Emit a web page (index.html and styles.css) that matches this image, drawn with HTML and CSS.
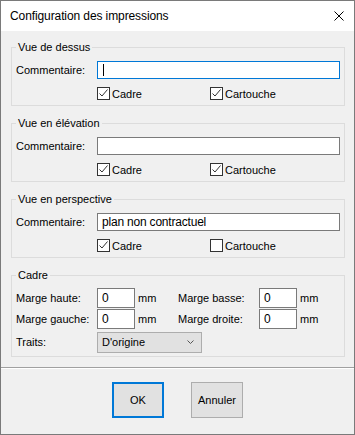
FILE: index.html
```html
<!DOCTYPE html>
<html lang="fr">
<head>
    <meta charset="UTF-8">
    <title>Configuration des impressions</title>
    <link rel="stylesheet" href="styles.css">
</head>
<body>
<div class="fenetre">
    <div class="titre">
        <span>Configuration des impressions</span>
        <svg class="fermer" width="10" height="10" viewBox="0 0 10 10"><path d="M0.5 0.5L9.5 9.5M9.5 0.5L0.5 9.5" stroke="#000" stroke-width="1"/></svg>
    </div>

    <div class="contenu">
        <!-- Vue de dessus -->
        <fieldset class="groupe">
            <legend>Vue de dessus</legend>
            <div class="ligne">
                <span>Commentaire:</span>
                <div class="champ actif"><span class="curseur"></span></div>
            </div>
            <div class="ligne cases">
                <span></span>
                <div class="options">
                    <div class="option"><span class="case"><svg width="11" height="11" viewBox="0 0 11 11"><path d="M1.5 5.5L4 8L9.5 1.5" fill="none" stroke="#333" stroke-width="1"/></svg></span>Cadre</div>
                    <div class="option"><span class="case"><svg width="11" height="11" viewBox="0 0 11 11"><path d="M1.5 5.5L4 8L9.5 1.5" fill="none" stroke="#333" stroke-width="1"/></svg></span>Cartouche</div>
                </div>
            </div>
        </fieldset>

        <!-- Vue en élévation -->
        <fieldset class="groupe">
            <legend>Vue en élévation</legend>
            <div class="ligne">
                <span>Commentaire:</span>
                <div class="champ"></div>
            </div>
            <div class="ligne cases">
                <span></span>
                <div class="options">
                    <div class="option"><span class="case"><svg width="11" height="11" viewBox="0 0 11 11"><path d="M1.5 5.5L4 8L9.5 1.5" fill="none" stroke="#333" stroke-width="1"/></svg></span>Cadre</div>
                    <div class="option"><span class="case"><svg width="11" height="11" viewBox="0 0 11 11"><path d="M1.5 5.5L4 8L9.5 1.5" fill="none" stroke="#333" stroke-width="1"/></svg></span>Cartouche</div>
                </div>
            </div>
        </fieldset>

        <!-- Vue en perspective -->
        <fieldset class="groupe">
            <legend>Vue en perspective</legend>
            <div class="ligne">
                <span>Commentaire:</span>
                <div class="champ">plan non contractuel</div>
            </div>
            <div class="ligne cases">
                <span></span>
                <div class="options">
                    <div class="option"><span class="case"><svg width="11" height="11" viewBox="0 0 11 11"><path d="M1.5 5.5L4 8L9.5 1.5" fill="none" stroke="#333" stroke-width="1"/></svg></span>Cadre</div>
                    <div class="option"><span class="case"></span>Cartouche</div>
                </div>
            </div>
        </fieldset>

        <!-- Cadre -->
        <fieldset class="groupe cadre">
            <legend>Cadre</legend>
            <div class="grille">
                <span>Marge haute:</span>
                <div class="champ">0</div>
                <span class="unite">mm</span>
                <span>Marge basse:</span>
                <div class="champ">0</div>
                <span class="unite">mm</span>

                <span>Marge gauche:</span>
                <div class="champ">0</div>
                <span class="unite">mm</span>
                <span>Marge droite:</span>
                <div class="champ">0</div>
                <span class="unite">mm</span>

                <span class="traits">Traits:</span>
                <div class="liste">
                    <span>D'origine</span>
                    <svg width="7" height="4" viewBox="0 0 7 4"><path d="M0.5 0.5L3.5 3.5L6.5 0.5" fill="none" stroke="#555" stroke-width="1"/></svg>
                </div>
            </div>
        </fieldset>
    </div>

    <div class="separateur"></div>

    <div class="boutons">
        <div class="bouton defaut">OK</div>
        <div class="bouton">Annuler</div>
    </div>
</div>
</body>
</html>
```

FILE: styles.css
```css
body {
    margin: 0;
    font-family: "Liberation Sans", Arial, sans-serif;
    font-size: 11px;
    color: #000;
}

.fenetre {
    width: 353px;
    height: 433px;
    border: 1px solid #7a7a7a;
    background: #f0f0f0;
}

.titre {
    height: 30px;
    background: #fff;
    display: flex;
    align-items: center;
    justify-content: space-between;
    padding: 0 10px 0 9px;
    font-size: 12px;
    letter-spacing: -0.1px;
}

.contenu {
    padding: 9px 9px 0 10px;
}

.groupe {
    margin: 0 0 10px;
    padding: 7px 4px 5px;
    border: 1px solid #dcdcdc;
    min-width: 0;
}

.groupe legend {
    padding: 0 2px;
    line-height: 14px;
}

.ligne {
    display: grid;
    grid-template-columns: 81px 1fr;
    align-items: center;
}

.cases {
    margin-top: 8px;
}

.champ {
    height: 18px;
    box-sizing: border-box;
    border: 1px solid #7a7a7a;
    background: #fff;
    padding-left: 4px;
    display: flex;
    align-items: center;
    font-size: 12px;
    letter-spacing: -0.2px;
}

.champ.actif {
    border-color: #0078d7;
}

.curseur {
    width: 1px;
    height: 12px;
    margin-left: 1px;
    background: #000;
}

.options {
    display: flex;
    height: 13px;
}

.option {
    display: flex;
    align-items: center;
    gap: 2px;
    width: 113px;
}

.case {
    width: 13px;
    height: 13px;
    box-sizing: border-box;
    border: 1px solid #333;
    background: #fff;
    display: flex;
}

.cadre {
    padding-top: 6px;
}

.grille {
    display: grid;
    grid-template-columns: 81px 38px 43px 81px 38px auto;
    grid-template-rows: 20px 20px 21px;
    row-gap: 1px;
    align-items: center;
}

.grille .champ {
    height: 20px;
}

.unite {
    padding-left: 3px;
}

.traits, .liste {
    margin-top: 3px;
}

.liste {
    grid-column: 2 / span 3;
    width: 105px;
    height: 21px;
    box-sizing: border-box;
    border: 1px solid #adadad;
    background: #e1e1e1;
    display: flex;
    align-items: center;
    justify-content: space-between;
    padding: 0 7px 0 4px;
}

.separateur {
    margin-top: 2px;
    border-top: 1px solid #a0a0a0;
    border-bottom: 1px solid #fff;
}

.boutons {
    display: flex;
    justify-content: center;
    gap: 27px;
    padding-top: 13px;
}

.bouton {
    width: 52px;
    height: 36px;
    box-sizing: border-box;
    border: 1px solid #adadad;
    background: #e1e1e1;
    display: flex;
    align-items: center;
    justify-content: center;
}

.bouton.defaut {
    border: 2px solid #0078d7;
}
```
